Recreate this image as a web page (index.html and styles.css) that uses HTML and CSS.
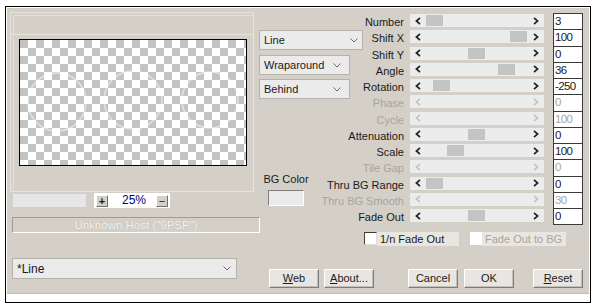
FILE: index.html
```html
<!DOCTYPE html>
<html>
<head>
<meta charset="utf-8">
<link rel="stylesheet" href="styles.css">
</head>
<body>
<div class="frame">
  <div class="dialog">
    <div class="left">
      <div class="group">
        <div class="group-head"></div>
        <div class="preview">
          <svg class="ghost" width="226" height="125" viewBox="0 0 226 125">
            <circle cx="37" cy="62" r="29"/>
            <circle cx="113" cy="60" r="29"/>
            <circle cx="190" cy="60" r="28"/>
          </svg>
        </div>
      </div>
      <div class="zoomrow">
        <div class="zoombar"></div>
        <div class="zoomfield">
          <span class="zbtn">+</span>
          <span class="zpct">25%</span>
          <span class="zbtn minus">−</span>
        </div>
      </div>
      <div class="host">Unknown Host ("9PSP")</div>
      <div class="select preset">
        <span>*Line</span>
        <svg class="chev" width="8" height="5" viewBox="0 0 8 5"><polyline points="0.5,0.5 4,4 7.5,0.5"/></svg>
      </div>
    </div>

    <div class="right">
      <div class="params">
        <div class="combos">
          <div class="select wide"><span>Line</span><svg class="chev" width="8" height="5" viewBox="0 0 8 5"><polyline points="0.5,0.5 4,4 7.5,0.5"/></svg></div>
          <div class="select narrow"><span>Wraparound</span><svg class="chev" width="8" height="5" viewBox="0 0 8 5"><polyline points="0.5,0.5 4,4 7.5,0.5"/></svg></div>
          <div class="select narrow last"><span>Behind</span><svg class="chev" width="8" height="5" viewBox="0 0 8 5"><polyline points="0.5,0.5 4,4 7.5,0.5"/></svg></div>
        </div>
        <div class="bgcolor">
          <div class="bglabel">BG Color</div>
          <div class="bgbox"></div>
        </div>

        <div class="lbl">Number</div>
        <div class="track"><span class="arr"><svg width="6" height="8" viewBox="0 0 6 8"><polyline points="5,0.8 1.4,4 5,7.2"/></svg></span><span class="rail"><span class="thumb" style="margin-left:0px"></span></span><span class="arr"><svg width="6" height="8" viewBox="0 0 6 8"><polyline points="1,0.8 4.6,4 1,7.2"/></svg></span></div>
        <div class="val">3</div>

        <div class="lbl">Shift X</div>
        <div class="track"><span class="arr"><svg width="6" height="8" viewBox="0 0 6 8"><polyline points="5,0.8 1.4,4 5,7.2"/></svg></span><span class="rail"><span class="thumb" style="margin-left:84px"></span></span><span class="arr"><svg width="6" height="8" viewBox="0 0 6 8"><polyline points="1,0.8 4.6,4 1,7.2"/></svg></span></div>
        <div class="val">100</div>

        <div class="lbl">Shift Y</div>
        <div class="track"><span class="arr"><svg width="6" height="8" viewBox="0 0 6 8"><polyline points="5,0.8 1.4,4 5,7.2"/></svg></span><span class="rail"><span class="thumb" style="margin-left:42px"></span></span><span class="arr"><svg width="6" height="8" viewBox="0 0 6 8"><polyline points="1,0.8 4.6,4 1,7.2"/></svg></span></div>
        <div class="val">0</div>

        <div class="lbl">Angle</div>
        <div class="track"><span class="arr"><svg width="6" height="8" viewBox="0 0 6 8"><polyline points="5,0.8 1.4,4 5,7.2"/></svg></span><span class="rail"><span class="thumb" style="margin-left:72px"></span></span><span class="arr"><svg width="6" height="8" viewBox="0 0 6 8"><polyline points="1,0.8 4.6,4 1,7.2"/></svg></span></div>
        <div class="val">36</div>

        <div class="lbl">Rotation</div>
        <div class="track"><span class="arr"><svg width="6" height="8" viewBox="0 0 6 8"><polyline points="5,0.8 1.4,4 5,7.2"/></svg></span><span class="rail"><span class="thumb" style="margin-left:7px"></span></span><span class="arr"><svg width="6" height="8" viewBox="0 0 6 8"><polyline points="1,0.8 4.6,4 1,7.2"/></svg></span></div>
        <div class="val">-250</div>

        <div class="lbl dis">Phase</div>
        <div class="track dis"><span class="arr"><svg width="6" height="8" viewBox="0 0 6 8"><polyline points="5,0.8 1.4,4 5,7.2"/></svg></span><span class="rail"></span><span class="arr"><svg width="6" height="8" viewBox="0 0 6 8"><polyline points="1,0.8 4.6,4 1,7.2"/></svg></span></div>
        <div class="val dis">0</div>

        <div class="lbl dis">Cycle</div>
        <div class="track dis"><span class="arr"><svg width="6" height="8" viewBox="0 0 6 8"><polyline points="5,0.8 1.4,4 5,7.2"/></svg></span><span class="rail"></span><span class="arr"><svg width="6" height="8" viewBox="0 0 6 8"><polyline points="1,0.8 4.6,4 1,7.2"/></svg></span></div>
        <div class="val dis">100</div>

        <div class="lbl">Attenuation</div>
        <div class="track"><span class="arr"><svg width="6" height="8" viewBox="0 0 6 8"><polyline points="5,0.8 1.4,4 5,7.2"/></svg></span><span class="rail"><span class="thumb" style="margin-left:42px"></span></span><span class="arr"><svg width="6" height="8" viewBox="0 0 6 8"><polyline points="1,0.8 4.6,4 1,7.2"/></svg></span></div>
        <div class="val">0</div>

        <div class="lbl">Scale</div>
        <div class="track"><span class="arr"><svg width="6" height="8" viewBox="0 0 6 8"><polyline points="5,0.8 1.4,4 5,7.2"/></svg></span><span class="rail"><span class="thumb" style="margin-left:21px"></span></span><span class="arr"><svg width="6" height="8" viewBox="0 0 6 8"><polyline points="1,0.8 4.6,4 1,7.2"/></svg></span></div>
        <div class="val">100</div>

        <div class="lbl dis">Tile Gap</div>
        <div class="track dis"><span class="arr"><svg width="6" height="8" viewBox="0 0 6 8"><polyline points="5,0.8 1.4,4 5,7.2"/></svg></span><span class="rail"></span><span class="arr"><svg width="6" height="8" viewBox="0 0 6 8"><polyline points="1,0.8 4.6,4 1,7.2"/></svg></span></div>
        <div class="val dis">0</div>

        <div class="lbl">Thru BG Range</div>
        <div class="track"><span class="arr"><svg width="6" height="8" viewBox="0 0 6 8"><polyline points="5,0.8 1.4,4 5,7.2"/></svg></span><span class="rail"><span class="thumb" style="margin-left:0px"></span></span><span class="arr"><svg width="6" height="8" viewBox="0 0 6 8"><polyline points="1,0.8 4.6,4 1,7.2"/></svg></span></div>
        <div class="val">0</div>

        <div class="lbl dis">Thru BG Smooth</div>
        <div class="track dis"><span class="arr"><svg width="6" height="8" viewBox="0 0 6 8"><polyline points="5,0.8 1.4,4 5,7.2"/></svg></span><span class="rail"></span><span class="arr"><svg width="6" height="8" viewBox="0 0 6 8"><polyline points="1,0.8 4.6,4 1,7.2"/></svg></span></div>
        <div class="val dis">30</div>

        <div class="lbl">Fade Out</div>
        <div class="track"><span class="arr"><svg width="6" height="8" viewBox="0 0 6 8"><polyline points="5,0.8 1.4,4 5,7.2"/></svg></span><span class="rail"><span class="thumb" style="margin-left:42px"></span></span><span class="arr"><svg width="6" height="8" viewBox="0 0 6 8"><polyline points="1,0.8 4.6,4 1,7.2"/></svg></span></div>
        <div class="val">0</div>
      </div>

      <div class="checks">
        <div class="chk"><span class="cbox"></span><span class="clabel">1/n Fade Out</span></div>
        <div class="chk off"><span class="cbox"></span><span class="clabel">Fade Out to BG</span></div>
      </div>

      <div class="buttons">
        <div class="btn web"><u>W</u>eb</div>
        <div class="btn about"><u>A</u>bout...</div>
        <div class="btn cancel">Cancel</div>
        <div class="btn ok">OK</div>
        <div class="btn reset"><u>R</u>eset</div>
      </div>
    </div>
  </div>
</div>
</body>
</html>
```

FILE: styles.css
```css
* { box-sizing: border-box; }

body {
  margin: 0;
  background: #fff;
  font: 11px "Liberation Sans", Arial, sans-serif;
  color: #1a1a1a;
}

.frame {
  margin: 6px 0 0 5px;
  width: 586px;
  height: 297px;
  border: 1px solid #000;
  padding: 1px 1px 0 1px;
  background: #fff;
}

.dialog {
  height: 286px;
  background: #d4d0c8;
  border-bottom: 1px solid #a6c2e2;
  display: flex;
  padding: 4px 0 0 3px;
}

/* ---------- left column ---------- */
.left {
  width: 249px;
  flex: none;
}

.group {
  width: 244px;
  height: 180px;
  border: 1px solid #e6e3dd;
  box-shadow: inset 2px 2px 0 #d4d0c8, inset 3px 3px 0 #e2dfd9;
}

.group-head {
  height: 22px;
  border-bottom: 1px solid #e6e3dd;
}

.preview {
  margin: 4px 0 0 8px;
  width: 228px;
  height: 127px;
  border: 1px solid #000;
  background: conic-gradient(#fff 25%, #c3c3c3 0 50%, #fff 0 75%, #c3c3c3 0) 0 0 / 16px 16px;
}

.ghost {
  display: block;
}
.ghost circle {
  fill: none;
  stroke: #fff;
  stroke-opacity: 0.55;
  stroke-width: 1.5;
}

.zoomrow {
  margin-top: 1px;
  padding-left: 2px;
  display: flex;
  gap: 7px;
  height: 15px;
}

.zoombar {
  width: 75px;
  background: #e6e6e6;
  border: 1px solid #cfcfcf;
}

.zoomfield {
  width: 76px;
  background: #fff;
  display: flex;
  align-items: flex-end;
  padding: 0 2px 1px 2px;
}

.zbtn {
  width: 12px;
  height: 12px;
  background: #d4d0c8;
  border: 1px solid;
  border-color: #fff #707070 #707070 #fff;
  font: bold 11px/10px "Liberation Sans", Arial, sans-serif;
  text-align: center;
}

.zbtn.minus {
  margin-left: auto;
  font-weight: normal;
}

.zpct {
  margin-left: 14px;
  color: #000080;
  line-height: 13px;
  font-size: 12px;
}

.host {
  margin: 9px 0 0 2px;
  width: 248px;
  height: 16px;
  border: 1px solid;
  border-color: #a09c94 #fff #fff #a09c94;
  text-align: center;
  line-height: 14px;
  font-size: 11.5px;
  color: #f6f5f2;
  text-shadow: 0 0 1px #aaa69e;
}

.select {
  height: 20px;
  background: #ebebeb;
  border: 1px solid #b4b2ad;
  display: flex;
  align-items: center;
  justify-content: space-between;
  padding: 0 6px 0 4px;
}

.chev polyline {
  fill: none;
  stroke: #6a6a6a;
  stroke-width: 1;
}

.preset {
  margin: 25px 0 0 2px;
  width: 225px;
  height: 21px;
  font-size: 12px;
  padding-right: 5px;
}

/* ---------- right column ---------- */
.right {
  padding-top: 1px;
  width: 329px;
}

.params {
  display: grid;
  grid-template-columns: 104px 47px 143px 30px;
  grid-template-rows: repeat(13, 16.25px);
}

.combos {
  grid-column: 1;
  grid-row: 2 / span 5;
  align-self: start;
  margin-top: 1px;
  display: flex;
  flex-direction: column;
  align-items: flex-start;
}

.select.wide { width: 104px; padding-right: 4px; }
.select.narrow { width: 91px; margin-top: 5px; padding-right: 8px; }
.select.narrow.last { margin-top: 4px; }

.bgcolor {
  grid-column: 1;
  grid-row: 11 / span 3;
  justify-self: start;
  align-self: start;
  margin-left: 6px;
  width: 42px;
  display: flex;
  flex-direction: column;
  align-items: center;
}

.bglabel {
  margin-top: -3px;
  line-height: 13px;
  white-space: nowrap;
}

.bgbox {
  margin-top: 4px;
  width: 36px;
  height: 16px;
  background: #ebebeb;
  border: 1px solid;
  border-color: #808080 #fff #fff #808080;
}

.lbl {
  grid-column: 2;
  display: flex;
  justify-content: flex-end;
  padding: 1px 6px 0 0;
  line-height: 16px;
  white-space: nowrap;
}

.lbl.dis { color: #a7a49e; }

.track {
  grid-column: 3;
  align-self: start;
  margin-top: 1px;
  width: 134px;
  height: 13px;
  background: #ececec;
  display: flex;
  align-items: center;
}

.arr {
  width: 16px;
  display: flex;
  justify-content: center;
}

.arr svg { display: block; }

.arr polyline {
  fill: none;
  stroke: #222;
  stroke-width: 1.7;
}

.track.dis .arr polyline { stroke: #c4c4c4; }

.rail {
  flex: 1;
  height: 11px;
  display: flex;
}

.thumb {
  width: 17px;
  height: 11px;
  background: #c4c4c4;
}

.val {
  grid-column: 4;
  margin-bottom: -1px;
  border: 1px solid #3a3a3a;
  background: #fff;
  padding-left: 1px;
  line-height: 14px;
  font-size: 11.5px;
  letter-spacing: -0.6px;
}

.val.dis { color: #a7a49e; }

/* ---------- checkboxes ---------- */
.checks {
  margin-top: 8px;
  padding-left: 105px;
  display: flex;
  height: 14px;
}

.chk {
  display: flex;
}

.cbox {
  width: 13px;
  height: 13px;
  background: #fff;
  border: 1px solid;
  border-color: #404040 #dcdcdc #dcdcdc #404040;
}

.clabel {
  width: 82px;
  height: 14px;
  background: #e8e6e1;
  padding-left: 3px;
  line-height: 14px;
  white-space: nowrap;
}

.chk.off {
  margin-left: 11px;
}

.chk.off .cbox {
  width: 12px;
  border-color: #fff;
}

.chk.off .clabel {
  width: 84px;
  color: #a7a49e;
}

/* ---------- buttons ---------- */
.buttons {
  margin-top: 23px;
  display: flex;
}

.btn {
  width: 50px;
  height: 19px;
  background: #e8e6e2;
  border: 1px solid;
  border-color: #fff #7c7c7c #7c7c7c #fff;
  box-shadow: inset -1px -1px 0 #c4c0b8;
  text-align: center;
  line-height: 16px;
}

.web { margin-left: 10px; }
.about { margin-left: 5px; }
.cancel { margin-left: 34px; }
.ok { margin-left: 6px; }
.reset { margin-left: 19px; }
```
